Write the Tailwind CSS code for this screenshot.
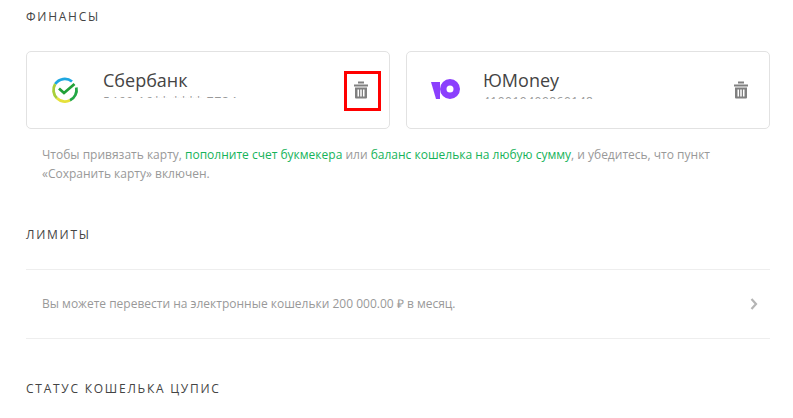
<!DOCTYPE html>
<html>
<head>
  <title>Финансы</title>
  <script src="https://cdn.jsdelivr.net/npm/@tailwindcss/browser@4"></script>
</head>
<body class="bg-white font-['Open_Sans',sans-serif] overflow-hidden">
  <div class="w-[793px] h-[418px] overflow-hidden pl-[26px] pr-[23px] pt-[9px]">
    <h2 class="text-[12px] leading-[16px] tracking-[1.75px] text-[#444]">ФИНАНСЫ</h2>

    <div class="flex gap-4 mt-[26px]">
      <div class="relative w-[364px] h-[78px] flex border border-[#e2e2e2] rounded-[5px] bg-white">
        <div class="w-[76px] flex justify-center pt-[24px] shrink-0">
          <svg width="28" height="28" viewBox="0 0 28 28" fill="none">
            <path d="M21 5.500A11.500 11.500 0 0 0 4.200 8" stroke="#1ea7e1" stroke-width="2.800"/>
            <path d="M4.200 8A11.500 11.500 0 0 0 6 22.300" stroke="#a8cf3a" stroke-width="2.800"/>
            <path d="M6 22.300A11.500 11.500 0 0 0 19 24.300" stroke="#e6e13a" stroke-width="2.800"/>
            <path d="M19 24.300A11.500 11.500 0 0 0 25.300 11.500" stroke="#22a745" stroke-width="2.800"/>
            <path d="M8 12.500L13 17L23.500 8" stroke="#21a038" stroke-width="2.800"/>
          </svg>
        </div>
        <div class="min-w-0">
          <div class="text-[18px] leading-[24px] text-[#444] mt-[16px]">Сбербанк</div>
          <div class="text-[12px] leading-[16px] text-[#999] tracking-[0.9px] h-[4px] mt-[2px] overflow-hidden">5469 16** **** 7734</div>
        </div>
        <div class="absolute left-[317px] top-[19px] w-[37px] h-[40px] border-[3px] border-[#ff0000] flex items-start pl-[7px] pt-[7px]">
          <svg class="block" width="14" height="18" viewBox="0 0 14 17" fill="#808080">
            <rect x="4" y="0" width="6" height="2"/>
            <rect x="0" y="3" width="14" height="2"/>
            <path fill-rule="evenodd" d="M1 6h12v10a1 1 0 0 1-1 1H2a1 1 0 0 1-1-1zM3.500 8v7h1.500V8zM6.250 8v7h1.500V8zM9 8v7h1.500V8z"/>
          </svg>
        </div>
      </div>

      <div class="relative w-[364px] h-[78px] flex border border-[#e2e2e2] rounded-[5px] bg-white">
        <div class="w-[76px] flex justify-center pt-[27px] shrink-0">
          <svg class="ml-[1px]" width="29" height="20" viewBox="0 0 29 20" fill="#8b3ffd">
            <path d="M0 3h9v17H5z"/>
            <path fill-rule="evenodd" d="M19 0a10 10 0 1 1 0 20a10 10 0 0 1 0-20zM19 6.500a3.500 3.500 0 1 0 0 7a3.500 3.500 0 0 0 0-7z"/>
          </svg>
        </div>
        <div class="min-w-0">
          <div class="text-[18px] leading-[24px] text-[#444] mt-[16px]">ЮMoney</div>
          <div class="text-[12px] leading-[16px] text-[#999] tracking-[0.5px] h-[5px] mt-[2px] overflow-hidden">410019409860148</div>
        </div>
        <div class="absolute left-[327px] top-[29px]">
          <svg class="block" width="14" height="18" viewBox="0 0 14 17" fill="#808080">
            <rect x="4" y="0" width="6" height="2"/>
            <rect x="0" y="3" width="14" height="2"/>
            <path fill-rule="evenodd" d="M1 6h12v10a1 1 0 0 1-1 1H2a1 1 0 0 1-1-1zM3.500 8v7h1.500V8zM6.250 8v7h1.500V8zM9 8v7h1.500V8z"/>
          </svg>
        </div>
      </div>
    </div>

    <p class="text-[12px] leading-[19px] text-[#999] ml-4 mt-[16px] w-[700px]">
      Чтобы привязать карту, <a class="text-[#16b35a]">пополните счет букмекера</a> или <a class="text-[#16b35a]">баланс кошелька на любую сумму</a>, и убедитесь, что пункт «Сохранить карту» включен.
    </p>

    <h2 class="text-[12px] leading-[16px] tracking-[1.75px] text-[#444] mt-[44px]">ЛИМИТЫ</h2>

    <div class="w-[744px] h-[70px] mt-[26px] border-y border-[#eeeeee] flex items-center justify-between pl-4 pr-3">
      <span class="text-[12px] text-[#999]">Вы можете перевести на электронные кошельки 200 000.00 ₽ в месяц.</span>
      <svg width="8" height="12" viewBox="0 0 8 12" fill="none"><path d="M1.500 1L6 6L1.500 11" stroke="#b5b5b5" stroke-width="2.200"/></svg>
    </div>

    <h2 class="text-[12px] leading-[16px] tracking-[1.75px] text-[#444] mt-[42px]">СТАТУС КОШЕЛЬКА ЦУПИС</h2>
  </div>
</body>
</html>
